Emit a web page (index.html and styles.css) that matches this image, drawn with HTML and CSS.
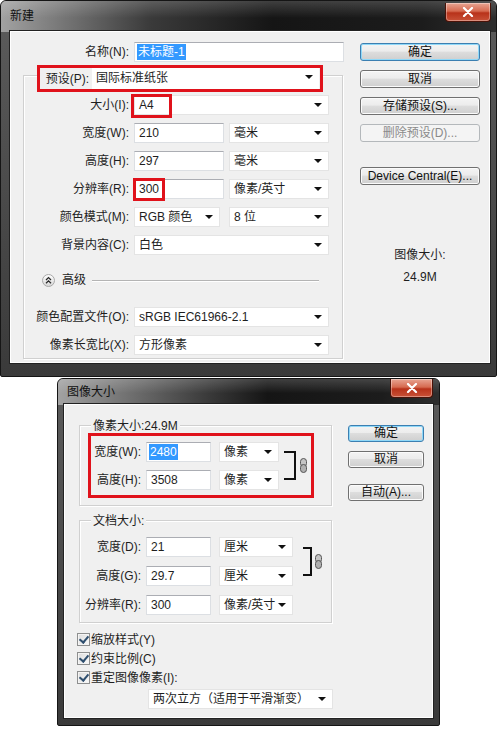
FILE: index.html
```html
<!DOCTYPE html>
<html lang="zh-CN">
<head>
    <meta charset="UTF-8">
    <meta name="viewport" content="width=device-width, initial-scale=1.0">
    <title>新建 / 图像大小</title>
    <link rel="stylesheet" href="styles.css">
</head>
<body>
    <!-- New document dialog -->
    <div class="dialog dlg-new">
        <div class="titlebar">
            <span class="title">新建</span>
            <span class="close-btn">
                <svg width="12" height="10" viewBox="0 0 12 10"><path d="M2 1 L10 9 M10 1 L2 9" stroke="#fff" stroke-width="2.2" stroke-linecap="round"/></svg>
            </span>
        </div>
        <div class="client">
            <div class="main-col">
                <div class="row">
                    <span class="lbl lbl-name">名称(N):</span>
                    <span class="input w-name"><span class="selected">未标题-1</span></span>
                </div>
                <div class="group">
                    <div class="preset">
                        <span class="preset-lbl">预设(P):</span>
                        <span class="select w-preset">国际标准纸张</span>
                    </div>
                    <div class="row first">
                        <span class="lbl">大小(I):</span>
                        <span class="select w-full">A4<span class="mark mark-a4"></span></span>
                    </div>
                    <div class="row">
                        <span class="lbl">宽度(W):</span>
                        <span class="input w-num">210</span>
                        <span class="select w-unit">毫米</span>
                    </div>
                    <div class="row">
                        <span class="lbl">高度(H):</span>
                        <span class="input w-num">297</span>
                        <span class="select w-unit">毫米</span>
                    </div>
                    <div class="row">
                        <span class="lbl">分辨率(R):</span>
                        <span class="input w-num">300<span class="mark mark-res"></span></span>
                        <span class="select w-unit">像素/英寸</span>
                    </div>
                    <div class="row">
                        <span class="lbl">颜色模式(M):</span>
                        <span class="select w-mode">RGB 颜色</span>
                        <span class="select w-unit">8 位</span>
                    </div>
                    <div class="row">
                        <span class="lbl">背景内容(C):</span>
                        <span class="select w-full">白色</span>
                    </div>
                    <div class="advanced">
                        <svg class="adv-icon" width="13" height="13" viewBox="0 0 13 13">
                            <defs>
                                <linearGradient id="advg" x1="0" y1="0" x2="0" y2="1">
                                    <stop offset="0" stop-color="#ffffff"/>
                                    <stop offset="1" stop-color="#d6d6d6"/>
                                </linearGradient>
                            </defs>
                            <circle cx="6.5" cy="6.5" r="6" fill="url(#advg)" stroke="#a8a8a8"/>
                            <path d="M4 6 L6.5 3.6 L9 6 M4 9.2 L6.5 6.8 L9 9.2" fill="none" stroke="#2a2a2a" stroke-width="1.3"/>
                        </svg>
                        <span class="adv-text">高级</span>
                        <span class="adv-line"></span>
                    </div>
                    <div class="row adv-first">
                        <span class="lbl">颜色配置文件(O):</span>
                        <span class="select w-full">sRGB IEC61966-2.1</span>
                    </div>
                    <div class="row">
                        <span class="lbl">像素长宽比(X):</span>
                        <span class="select w-full">方形像素</span>
                    </div>
                </div>
            </div>
            <div class="side-col">
                <span class="btn default">确定</span>
                <span class="btn">取消</span>
                <span class="btn">存储预设(S)...</span>
                <span class="btn disabled">删除预设(D)...</span>
                <span class="btn device">Device Central(E)...</span>
                <p class="info-label">图像大小:</p>
                <p class="info-value">24.9M</p>
            </div>
        </div>
    </div>

    <!-- Image size dialog -->
    <div class="dialog dlg-size">
        <div class="titlebar">
            <span class="title">图像大小</span>
            <span class="close-btn">
                <svg width="12" height="10" viewBox="0 0 12 10"><path d="M2 1 L10 9 M10 1 L2 9" stroke="#fff" stroke-width="2.2" stroke-linecap="round"/></svg>
            </span>
        </div>
        <div class="client">
            <div class="main-col">
                <div class="group">
                    <span class="legend">像素大小:24.9M</span>
                    <div class="linked marked">
                        <div class="rows">
                            <div class="row">
                                <span class="lbl">宽度(W):</span>
                                <span class="input w-px"><span class="selected">2480</span></span>
                                <span class="select w-pxunit">像素</span>
                            </div>
                            <div class="row">
                                <span class="lbl">高度(H):</span>
                                <span class="input w-px">3508</span>
                                <span class="select w-pxunit">像素</span>
                            </div>
                        </div>
                        <span class="bracket"></span>
                        <svg class="chain" width="7" height="15" viewBox="0 0 7 15">
                            <rect x="0.5" y="0.5" width="6" height="8" rx="3" fill="#c4c4c4" stroke="#555"/>
                            <rect x="0.5" y="6.5" width="6" height="8" rx="3" fill="#b0b0b0" stroke="#555"/>
                        </svg>
                    </div>
                </div>
                <div class="group doc">
                    <span class="legend">文档大小:</span>
                    <div class="linked">
                        <div class="rows">
                            <div class="row">
                                <span class="lbl">宽度(D):</span>
                                <span class="input w-px">21</span>
                                <span class="select w-docunit">厘米</span>
                            </div>
                            <div class="row">
                                <span class="lbl">高度(G):</span>
                                <span class="input w-px">29.7</span>
                                <span class="select w-docunit">厘米</span>
                            </div>
                        </div>
                        <span class="bracket"></span>
                        <svg class="chain" width="7" height="15" viewBox="0 0 7 15">
                            <rect x="0.5" y="0.5" width="6" height="8" rx="3" fill="#c4c4c4" stroke="#555"/>
                            <rect x="0.5" y="6.5" width="6" height="8" rx="3" fill="#b0b0b0" stroke="#555"/>
                        </svg>
                    </div>
                    <div class="row">
                        <span class="lbl">分辨率(R):</span>
                        <span class="input w-px">300</span>
                        <span class="select w-docunit">像素/英寸</span>
                    </div>
                </div>
                <div class="check-row first"><span class="check"></span>缩放样式(Y)</div>
                <div class="check-row"><span class="check"></span>约束比例(C)</div>
                <div class="check-row"><span class="check"></span>重定图像像素(I):</div>
                <span class="select w-method">两次立方（适用于平滑渐变）</span>
            </div>
            <div class="side-col">
                <span class="btn default">确定</span>
                <span class="btn">取消</span>
                <span class="btn auto">自动(A)...</span>
            </div>
        </div>
    </div>
</body>
</html>
```

FILE: styles.css
```css
body {
    margin: 0;
    background: #fff;
    font-family: "Liberation Sans", "Noto Sans CJK SC", sans-serif;
    font-size: 12px;
    color: #1e1e1e;
}

/* window frame */
.dialog {
    box-sizing: border-box;
    background: linear-gradient(to bottom, #5c5c5c, #3a3a3a);
    border: 1px solid #151515;
    border-radius: 6px 6px 2px 2px;
    display: flex;
    flex-direction: column;
}
.dlg-new {
    width: 497px;
    height: 377px;
}
.dlg-size {
    width: 383px;
    height: 348px;
    margin: 1px 0 0 57px;
}
.titlebar {
    display: flex;
    justify-content: space-between;
    align-items: flex-start;
    border-radius: 5px 5px 0 0;
    background:
        linear-gradient(to bottom, rgba(255, 255, 255, 0.18), rgba(255, 255, 255, 0) 55%),
        linear-gradient(to right, #a2a2a2 0, #858585 40px, #3a3a3a 150px, #151515 55%, #1c1c1c 85%, #2e2e2e 100%);
}
.dlg-new .titlebar {
    height: 29px;
    padding: 2px 5px 0 9px;
}
.dlg-size .titlebar {
    height: 26px;
    padding: 0 6px 0 9px;
}
.title {
    color: #111;
    line-height: 26px;
}
.dlg-size .title {
    line-height: 27px;
}
.close-btn {
    display: flex;
    align-items: center;
    justify-content: center;
    box-sizing: border-box;
    border: 1px solid #4a1208;
    border-top: none;
    border-radius: 0 0 4px 4px;
    background: linear-gradient(to bottom, #e8a593 0, #d66a50 45%, #b8321a 55%, #c95238 100%);
    box-shadow: inset 0 0 0 1px rgba(255, 255, 255, 0.35);
}
.dlg-new .close-btn {
    width: 46px;
    height: 19px;
}
.dlg-size .close-btn {
    width: 43px;
    height: 19px;
}
.client {
    display: flex;
    background: #f0f0f0;
    box-shadow: 0 0 0 1px #fff, 0 0 0 2px #222;
}
.dlg-new .client {
    height: 330px;
    margin: 0 7px 0 10px;
}
.dlg-size .client {
    height: 312px;
    margin: 0 7px 0 7px;
}

/* shared controls */
.row {
    display: flex;
    align-items: center;
    height: 20px;
}
.lbl {
    text-align: right;
    white-space: nowrap;
    line-height: 18px;
    margin-right: 5px;
    flex: none;
}
.input, .select {
    position: relative;
    box-sizing: border-box;
    display: block;
    height: 20px;
    line-height: 18px;
    padding-left: 4px;
    background: #fff;
    white-space: nowrap;
    flex: none;
}
.input {
    border: 1px solid #dcdfe3;
    border-top-color: #abadb3;
}
.select {
    border: 1px solid #e4e4e4;
}
.select::after {
    content: "";
    position: absolute;
    right: 6px;
    top: 7px;
    border-left: 4px solid transparent;
    border-right: 4px solid transparent;
    border-top: 4px solid #111;
}
.selected {
    background: #3399ff;
    color: #fff;
    padding: 1px 1px;
}
.mark {
    position: absolute;
    border: 3px solid #e0121b;
}
.btn {
    display: block;
    box-sizing: border-box;
    height: 18px;
    line-height: 16px;
    text-align: center;
    border: 1px solid #707070;
    border-radius: 3px;
    background: linear-gradient(to bottom, #f4f4f4 0, #ececec 45%, #dddddd 50%, #cfcfcf 100%);
    box-shadow: inset 0 0 0 1px #fbfbfb;
    color: #111;
    margin-top: 9px;
}
.btn:first-child {
    margin-top: 11px;
}
.btn.default {
    border-color: #3c7fb1;
    box-shadow: inset 0 0 0 1px #8fd8f8;
}
.btn.disabled {
    border-color: #b4b8bb;
    background: #f4f4f4;
    box-shadow: none;
    color: #8a8a8a;
}

/* new dialog */
.dlg-new .main-col {
    width: 320px;
    padding-left: 12px;
}
.dlg-new .main-col > .row {
    margin-top: 10px;
}
.lbl-name {
    width: 106px;
}
.w-name {
    width: 210px;
    padding-left: 2px;
}
.dlg-new .group {
    margin-top: 13px;
    border: 1px solid #d0d0d0;
    box-shadow: inset 1px 1px 0 #fff, 1px 1px 0 #fff;
    padding-bottom: 3px;
}
.preset {
    position: relative;
    display: flex;
    align-items: center;
    box-sizing: border-box;
    width: 286px;
    height: 27px;
    margin: -11px 0 0 13px;
    border: 3px solid #e0121b;
    background: #f0f0f0;
}
.preset-lbl {
    flex: none;
    width: 49px;
    margin-right: 3px;
    line-height: 18px;
    text-align: right;
    white-space: nowrap;
}
.w-preset {
    width: 227px;
    height: 21px;
    border: none;
    line-height: 21px;
}
.dlg-new .group .lbl {
    width: 105px;
}
.dlg-new .group .row {
    margin-top: 8px;
}
.dlg-new .group .row.first {
    margin-top: 3px;
}
.w-full {
    width: 195px;
}
.w-num {
    width: 90px;
    margin-right: 5px;
}
.w-unit {
    width: 100px;
}
.w-mode {
    width: 86px;
    margin-right: 9px;
}
.mark-a4 {
    left: -4px;
    top: -2px;
    width: 41px;
    height: 24px;
    box-sizing: border-box;
}
.mark-res {
    left: -2px;
    top: -2px;
    width: 32px;
    height: 23px;
    box-sizing: border-box;
}
.advanced {
    display: flex;
    align-items: center;
    height: 20px;
    margin-top: 15px;
    padding-left: 18px;
}
.adv-icon {
    margin-right: 7px;
}
.adv-text {
    line-height: 18px;
}
.adv-line {
    flex: 1;
    height: 1px;
    background: #b4b4b4;
    box-shadow: 0 1px 0 #fff;
    margin: 0 23px 0 6px;
}
.dlg-new .group .row.adv-first {
    margin-top: 17px;
}
.dlg-new .side-col {
    width: 120px;
    margin-left: 17px;
}
.btn.device {
    margin-top: 25px;
}
.info-label, .info-value {
    margin: 0;
    text-align: center;
    line-height: 16px;
}
.info-label {
    margin-top: 62px;
}
.info-value {
    margin-top: 6px;
}

/* image size dialog */
.dlg-size .main-col {
    width: 253px;
    padding-left: 14px;
}
.dlg-size .group {
    margin-top: 20px;
    border: 1px solid #d0d0d0;
    box-shadow: inset 1px 1px 0 #fff, 1px 1px 0 #fff;
    padding-bottom: 7px;
}
.dlg-size .group.doc {
    margin-top: 14px;
}
.legend {
    display: block;
    width: max-content;
    height: 16px;
    line-height: 16px;
    margin: -8px 0 0 11px;
    padding: 0 2px;
    background: #f0f0f0;
}
.linked {
    display: flex;
    align-items: center;
}
.linked.marked {
    box-sizing: border-box;
    width: 226px;
    height: 65px;
    margin: -1px 0 0 8px;
    border: 3px solid #e0121b;
}
.linked .rows .row + .row {
    margin-top: 8px;
}
.doc .linked {
    margin-top: 8px;
}
.doc .linked .rows .row + .row {
    margin-top: 9px;
}
.doc > .row {
    margin-top: 9px;
}
.dlg-size .lbl {
    width: 50px;
}
.doc .lbl {
    width: 61px;
}
.w-px {
    width: 65px;
    margin-right: 8px;
}
.w-px .selected {
    margin-left: -2px;
}
.w-pxunit {
    width: 60px;
}
.w-docunit {
    width: 74px;
}
.bracket {
    box-sizing: border-box;
    width: 12px;
    height: 29px;
    margin-left: 5px;
    border: 2px solid #111;
    border-left: none;
}
.doc .bracket {
    width: 9px;
    margin-left: 10px;
}
.chain {
    margin-left: 4px;
}
.doc .chain {
    margin-left: 3px;
}
.check-row {
    display: flex;
    align-items: center;
    height: 19px;
    line-height: 18px;
    margin-left: -2px;
}
.check-row.first {
    margin-top: 7px;
}
.check {
    position: relative;
    box-sizing: border-box;
    width: 13px;
    height: 13px;
    margin-right: 1px;
    border: 1px solid #8e8f8f;
    background: linear-gradient(to bottom right, #dcdcdc, #fbfbfb);
    box-shadow: inset 0 0 0 1px #f4f4f4;
}
.check::after {
    content: "";
    position: absolute;
    left: 3px;
    top: 0;
    width: 4px;
    height: 7px;
    border: solid #2f4f6f;
    border-width: 0 2px 2px 0;
    transform: rotate(40deg);
}
.w-method {
    width: 185px;
    margin: 2px 0 0 69px;
}
.dlg-size .side-col {
    width: 76px;
    margin-left: 16px;
}
.dlg-size .btn {
    height: 17px;
    line-height: 15px;
}
.dlg-size .btn:first-child {
    margin-top: 20px;
}
.btn.auto {
    margin-top: 16px;
}
```
